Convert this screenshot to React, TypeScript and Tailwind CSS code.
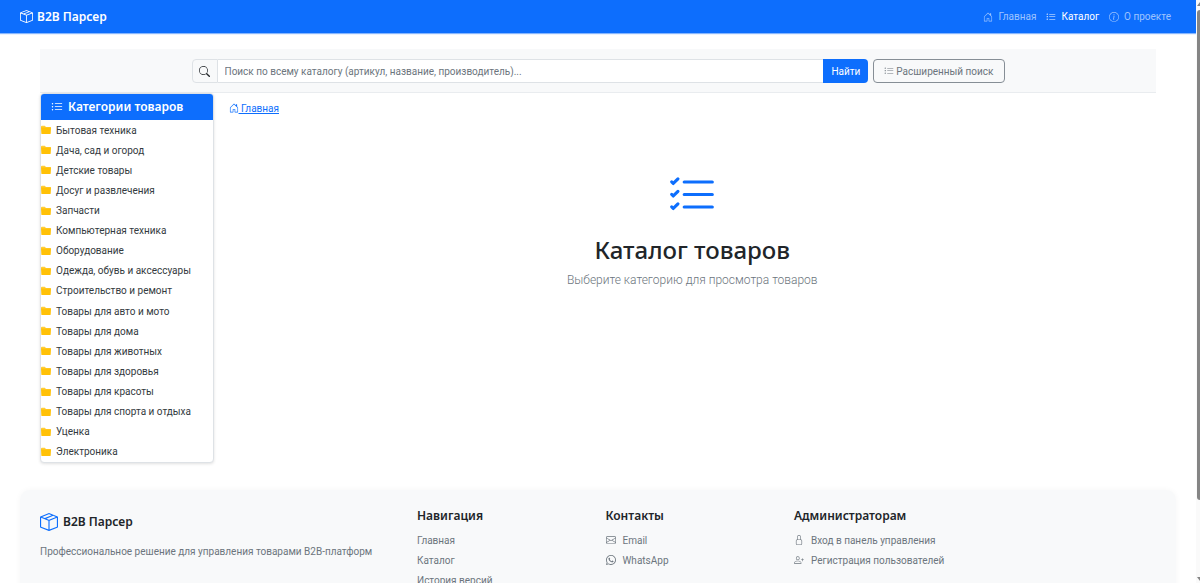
import type { ReactNode } from "react";
import {
  BsBoxSeam,
  BsEnvelope,
  BsHouseDoor,
  BsInfoCircle,
  BsListCheck,
  BsListUl,
  BsLock,
  BsPersonPlus,
  BsSearch,
  BsWhatsapp,
} from "react-icons/bs";

const categories = [
  "Бытовая техника",
  "Дача, сад и огород",
  "Детские товары",
  "Досуг и развлечения",
  "Запчасти",
  "Компьютерная техника",
  "Оборудование",
  "Одежда, обувь и аксессуары",
  "Строительство и ремонт",
  "Товары для авто и мото",
  "Товары для дома",
  "Товары для животных",
  "Товары для здоровья",
  "Товары для красоты",
  "Товары для спорта и отдыха",
  "Уценка",
  "Электроника",
];

function FolderIcon() {
  return (
    <svg viewBox="0 0 16 16" className="size-[10px] text-[#ffc107]" fill="currentColor" aria-hidden="true">
      <path d="M1.5 1H6l2 2h6.5A1.5 1.5 0 0 1 16 4.5V5H0V2.5A1.5 1.5 0 0 1 1.5 1z" opacity="0.8" />
      <path d="M0 4h16l-.5 9a1.500 1.500 0 0 1-1.500 1.500H2A1.500 1.500 0 0 1 .5 13z" />
    </svg>
  );
}

function Header() {
  return (
    <header className="flex h-[33px] items-center justify-between bg-[#0d6efd] px-5 text-white shadow-[0_1px_1px_rgba(13,110,253,0.5)]">
      <a href="#" className="flex items-center gap-1 font-['Noto_Sans',sans-serif] text-[12px] font-semibold">
        <BsBoxSeam className="size-[13px]" />
        B2B Парсер
      </a>
      <nav className="flex items-center gap-[10px] pr-[5px] text-[10px] text-white/60">
        <a href="#" className="flex items-center gap-[5px]">
          <BsHouseDoor className="size-[10px]" />
          Главная
        </a>
        <a href="#" className="flex items-center gap-[5px] text-white">
          <BsListUl className="size-[10px]" />
          Каталог
        </a>
        <a href="#" className="flex items-center gap-[5px]">
          <BsInfoCircle className="size-[10px]" />
          О проекте
        </a>
      </nav>
    </header>
  );
}

function SearchBar() {
  return (
    <section className="border-b border-[#e9ecef] bg-[#f8f9fa] pt-[10px] pb-[9px]">
      <form className="mx-auto flex h-6 max-w-[813px] gap-[5px] text-[10px]">
        <div className="flex flex-1">
          <label
            htmlFor="search"
            aria-label="Поиск"
            className="flex w-[26px] items-center justify-center rounded-l-[4px] border border-[#dee2e6] bg-[#f8f9fa]"
          >
            <BsSearch className="size-[11px]" />
          </label>
          <input
            id="search"
            type="search"
            placeholder="Поиск по всему каталогу (артикул, название, производитель)..."
            className="min-w-0 flex-1 border-y border-[#dee2e6] bg-white px-[7px] placeholder:text-[#6c757d]"
          />
          <button type="button" className="rounded-r-[4px] bg-[#0d6efd] px-2 text-white">
            Найти
          </button>
        </div>
        <button
          type="button"
          className="flex items-center justify-center gap-[2px] rounded-[4px] border border-[#868e96] px-[10px] text-[#6c757d]"
        >
          <BsListUl className="size-[10px]" />
          Расширенный поиск
        </button>
      </form>
    </section>
  );
}

function Sidebar() {
  return (
    <aside className="col-span-2 self-start overflow-hidden rounded-[4px] border border-[#dee2e6] bg-white shadow-[0_1px_3px_rgba(0,0,0,0.12)]">
      <h2 className="flex h-[26px] items-center gap-[5px] bg-[#0d6efd] px-[10px] font-['Noto_Sans',sans-serif] text-[12px] font-semibold text-white">
        <BsListUl className="size-3" />
        Категории товаров
      </h2>
      <ul className="grid min-h-[342px] auto-rows-fr text-[10px] text-[#333a40]">
        {categories.map((name) => (
          <li key={name}>
            <a href="#" className="flex h-full items-center gap-[5px]">
              <FolderIcon />
              {name}
            </a>
          </li>
        ))}
      </ul>
    </aside>
  );
}

function FooterLink({ icon, children }: { icon?: ReactNode; children: ReactNode }) {
  return (
    <li>
      <a href="#" className="flex h-5 items-center gap-[7px]">
        {icon}
        {children}
      </a>
    </li>
  );
}

function FooterColumn({ title, wide, children }: { title: string; wide?: boolean; children: ReactNode }) {
  return (
    <div className={wide ? "col-span-4" : "col-span-2"}>
      <h3 className="mb-[6px] font-['Noto_Sans',sans-serif] text-[12px] leading-4 font-semibold text-[#212529]">
        {title}
      </h3>
      <ul>{children}</ul>
    </div>
  );
}

function Footer() {
  return (
    <footer className="mx-5 mt-[27px] grid grid-cols-12 gap-x-[15px] rounded-t-[10px] bg-[#f8f9fa] px-5 pt-[18px] pb-8 text-[10px] text-[#6c757d] shadow-[0_0_6px_rgba(0,0,0,0.04)]">
      <div className="col-span-4">
        <h3 className="flex h-7 items-center gap-[5px] font-['Noto_Sans',sans-serif] text-[12px] font-semibold text-[#212529]">
          <BsBoxSeam className="size-[18px] text-[#0d6efd]" />
          B2B Парсер
        </h3>
        <p className="mt-2 leading-4">Профессиональное решение для управления товарами B2B-платформ</p>
      </div>
      <FooterColumn title="Навигация">
        <FooterLink>Главная</FooterLink>
        <FooterLink>Каталог</FooterLink>
        <FooterLink>История версий</FooterLink>
      </FooterColumn>
      <FooterColumn title="Контакты">
        <FooterLink icon={<BsEnvelope className="size-[10px]" />}>Email</FooterLink>
        <FooterLink icon={<BsWhatsapp className="size-[10px]" />}>WhatsApp</FooterLink>
      </FooterColumn>
      <FooterColumn title="Администраторам" wide>
        <FooterLink icon={<BsLock className="size-[10px]" />}>Вход в панель управления</FooterLink>
        <FooterLink icon={<BsPersonPlus className="size-[10px]" />}>Регистрация пользователей</FooterLink>
      </FooterColumn>
    </footer>
  );
}

export default function App() {
  return (
    <div className="flex h-screen bg-white font-['Roboto','Noto_Sans',sans-serif] text-[#212529]">
      <div className="min-w-0 flex-1 overflow-y-auto [scrollbar-width:none]">
        <Header />
        <div className="mx-10 mt-4">
          <SearchBar />
          <div className="grid grid-cols-12 gap-x-[15px]">
            <Sidebar />
            <main className="col-span-10">
              <a href="#" className="mt-[7px] inline-flex h-4 items-center text-[10px] text-[#0d6efd] underline">
                <BsHouseDoor className="size-[10px]" />
                <span className="whitespace-pre"> Главная</span>
              </a>
              <div className="mt-[51px] flex flex-col items-center">
                <BsListCheck className="size-[50px] text-[#0d6efd]" />
                <h1 className="mt-[13px] font-['Noto_Sans',sans-serif] text-[24px] leading-8 font-medium">
                  Каталог товаров
                </h1>
                <p className="mt-1 text-[12px] leading-5 font-light text-[#6c757d]">
                  Выберите категорию для просмотра товаров
                </p>
              </div>
            </main>
          </div>
        </div>
        <Footer />
      </div>
      <div aria-hidden="true" className="flex w-1 flex-col justify-between bg-[#fafafa] pl-[1px] text-[#858585]">
        <svg viewBox="0 0 3 6" className="h-[6px] w-[3px]" fill="currentColor">
          <path d="M3 2v4H0z" />
        </svg>
        <div className="mt-1 mb-auto h-[490px] rounded-l-full bg-[#858585]" />
        <svg viewBox="0 0 3 6" className="h-[6px] w-[3px]" fill="currentColor">
          <path d="M0 0h3v4z" />
        </svg>
      </div>
    </div>
  );
}
